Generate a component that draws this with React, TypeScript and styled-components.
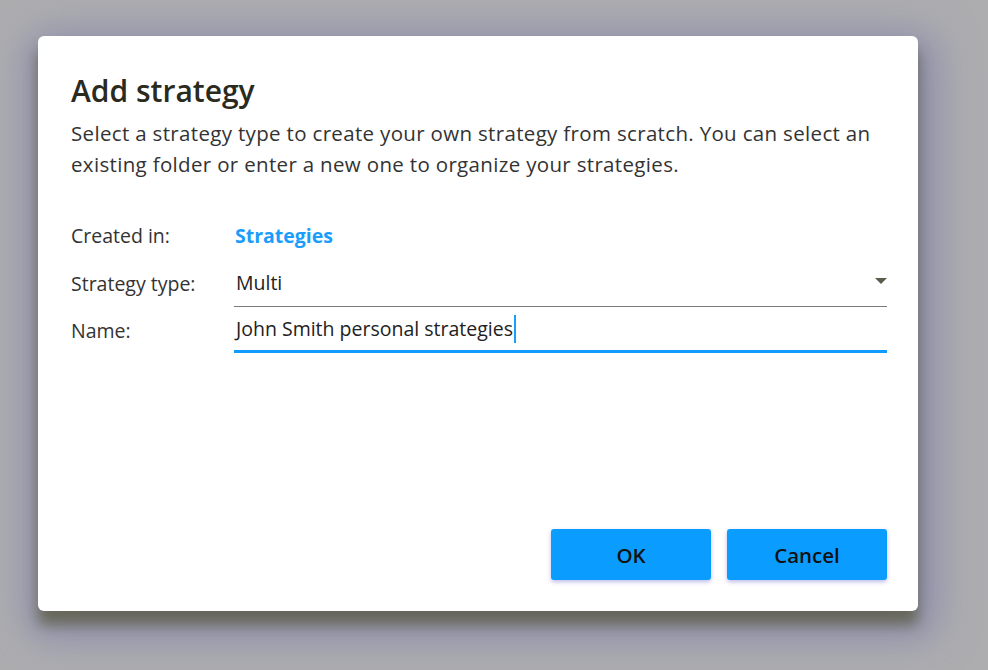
import React from 'react'
import styled, { createGlobalStyle } from 'styled-components'

const GlobalStyle = createGlobalStyle`
  html, body {
    margin: 0;
    padding: 0;
    height: 100%;
  }
  body {
    background: #adadb0;
    font-family: 'Open Sans', 'Noto Sans', sans-serif;
    overflow: hidden;
  }
`

const Backdrop = styled.div`
  width: 988px;
  height: 670px;
  box-sizing: border-box;
  padding: 36px 0 0 38px;
`

const Dialog = styled.div`
  width: 880px;
  height: 575px;
  box-sizing: border-box;
  background: #fff;
  border-radius: 6px;
  box-shadow:
    0 14px 14px rgba(85, 85, 55, 0.7),
    4px 12px 40px 14px rgba(125, 125, 170, 0.7);
  padding: 36px 31px 31px 33px;
  display: flex;
  flex-direction: column;
`

const Title = styled.h1`
  margin: 0;
  font-size: 30px;
  font-weight: 600;
  color: #2a2a1e;
  line-height: 38px;
`

const Description = styled.p`
  margin: 8px 0 0;
  font-size: 20.5px;
  letter-spacing: 0.33px;
  line-height: 31px;
  color: #333;
`

const Form = styled.div`
  margin-top: 31px;
  display: grid;
  grid-template-columns: 163px 1fr;
  grid-template-rows: 48px 48px 46px;
`

const Label = styled.div`
  font-size: 19.5px;
  color: #333;
  display: flex;
  align-items: center;
`

const LinkValue = styled.div`
  font-size: 19.5px;
  font-weight: 700;
  color: #1a9dfb;
  display: flex;
  align-items: center;
  padding-left: 1px;
`

const Field = styled.div<{ $active?: boolean }>`
  position: relative;
  box-sizing: border-box;
  display: flex;
  align-items: center;
  border-bottom: ${p => (p.$active ? '3px solid #129bff' : '1px solid #7a7a7a')};
  font-size: 19.5px;
  color: #222;
  padding: 0 2px;
`

const Caret = styled.span`
  position: absolute;
  right: 0;
  top: 19px;
  width: 0;
  height: 0;
  border-left: 6px solid transparent;
  border-right: 6px solid transparent;
  border-top: 6px solid #5c5c4c;
`

const Cursor = styled.span`
  display: inline-block;
  width: 2px;
  height: 28px;
  margin-left: 1px;
  background: #1a9dfb;
`

const Footer = styled.div`
  margin-top: auto;
  display: flex;
  justify-content: flex-end;
  gap: 16px;
`

const Button = styled.button`
  width: 160px;
  height: 51px;
  border: none;
  border-radius: 3px;
  background: #0a9dff;
  color: #111;
  font-family: inherit;
  font-size: 20.5px;
  font-weight: 600;
  box-shadow: 0 2px 4px rgba(90, 90, 200, 0.4);
  cursor: pointer;
`

export default function App() {
  return (
    <>
      <GlobalStyle />
      <Backdrop>
        <Dialog>
          <Title>Add strategy</Title>
          <Description>
            Select a strategy type to create your own strategy from scratch. You can select an
            existing folder or enter a new one to organize your strategies.
          </Description>
          <Form>
            <Label>Created in:</Label>
            <LinkValue>Strategies</LinkValue>
            <Label>Strategy type:</Label>
            <Field>
              Multi
              <Caret />
            </Field>
            <Label>Name:</Label>
            <Field $active>
              John Smith personal strategies
              <Cursor />
            </Field>
          </Form>
          <Footer>
            <Button>OK</Button>
            <Button>Cancel</Button>
          </Footer>
        </Dialog>
      </Backdrop>
    </>
  )
}
